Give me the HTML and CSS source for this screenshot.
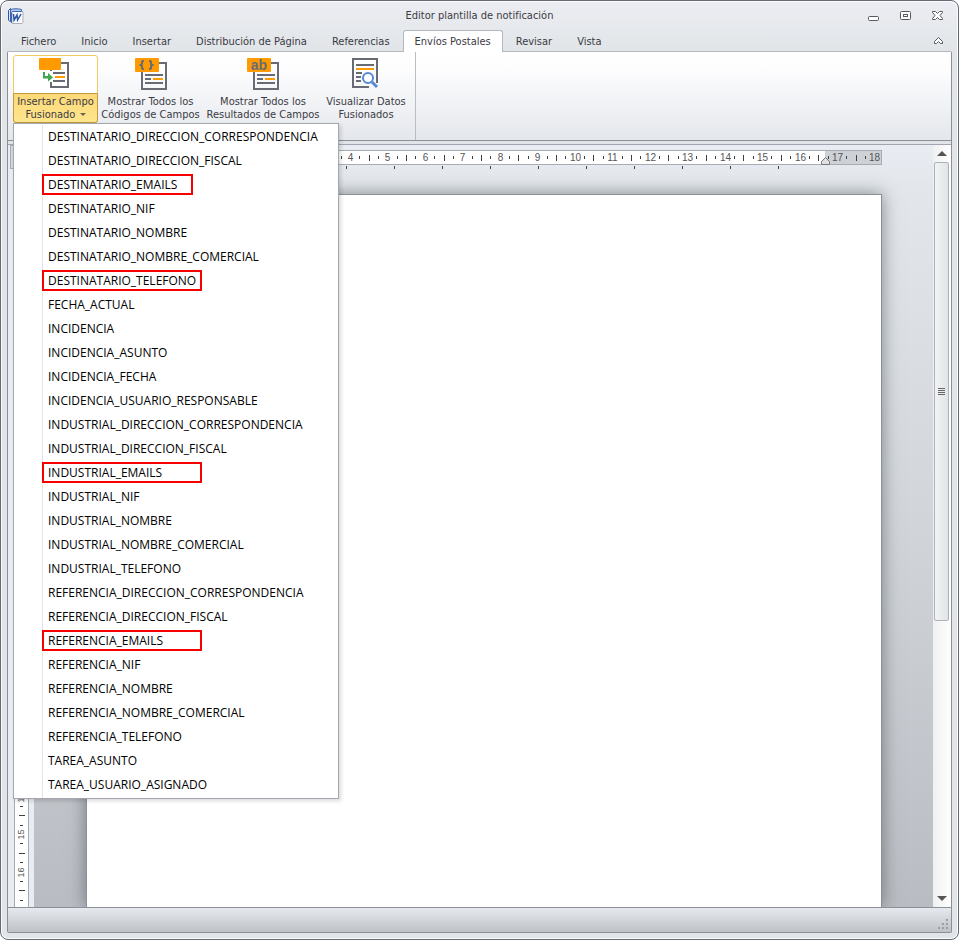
FILE: index.html
```html
<!DOCTYPE html>
<html lang="es">
<head>
  <meta charset="UTF-8" />
  <title>Editor plantilla de notificación</title>
  <link rel="stylesheet" href="styles.css">
</head>
<body>
  <div class="window">
    <header class="titlebar">
      <svg class="logo" width="17" height="16" viewBox="0 0 17 16" aria-hidden="true">
        <path d="M5 3.500h11v11l-1 1H5z" fill="#f8f9fc" stroke="#a9b1bf" />
        <path d="M1.500 2.500l2-2V14l-2-2z" fill="#dfe8f7" stroke="#2c57a7" />
        <path d="M3.500 1.500C7 .5 11 .5 14.500 1.500v2h-9l-1 1v10l-1-1z" fill="#b4c8ec" stroke="#3c66b4" />
        <path d="M6.500 6l.6 6 2.900-5 .6 5 3.400-6" fill="none" stroke="#2a55a5" stroke-width="1.500" />
      </svg>
      <h1>Editor plantilla de notificación</h1>
      <div class="window-buttons">
        <button aria-label="Minimizar"><svg width="12" height="12"><rect x="0.500" y="6.500" width="10" height="4" rx="1" fill="#fff" stroke="#555a62" /></svg></button>
        <button aria-label="Maximizar"><svg width="12" height="12"><rect x="0.500" y="1.500" width="10" height="8" rx="1" fill="#fff" stroke="#555a62" /><rect x="3.500" y="4.500" width="4" height="2" fill="#fff" stroke="#555a62" /></svg></button>
        <button aria-label="Cerrar"><svg width="12" height="12"><path d="M.5 1.500h3l2 2 2-2h3v1L8 5.500l2.500 3v1h-3l-2-2-2 2h-3v-1l2.500-3-2.500-3z" fill="#fff" stroke="#555a62" /></svg></button>
      </div>
    </header>

    <nav class="tabs">
      <button>Fichero</button>
      <button>Inicio</button>
      <button>Insertar</button>
      <button>Distribución de Página</button>
      <button>Referencias</button>
      <button class="active">Envíos Postales</button>
      <button>Revisar</button>
      <button>Vista</button>
      <button class="collapse" aria-label="Minimizar la cinta"><svg width="10" height="8"><path d="M.5 4.500L4.500.5l4 4v2h-2l-2-2-2 2h-2z" fill="#fff" stroke="#555a62" /></svg></button>
    </nav>

    <div class="workspace">
      <div class="ribbon">
        <div class="group">
          <div class="dropdown">
            <button class="tool open" aria-expanded="true">
              <svg width="34" height="34" viewBox="0 0 34 34">
                <path d="M12 12v18h17V6H22" fill="none" stroke="#686b74" stroke-width="2" />
                <path d="M14 16h12M14 24h12" stroke="#686b74" stroke-width="2" />
                <path d="M16 20h10" stroke="#ff9b00" stroke-width="2" />
                <path d="M10 14h3v11h-3z" fill="#fff" />
                <rect x="0" y="1" width="22" height="12" rx="1" fill="#ff9b00" />
                <path d="M4 15h2v4h3v-3l5 4.500-5 4v-3H4z" fill="#3fa84e" />
              </svg>
              <span class="label">Insertar Campo<br>Fusionado <i class="caret"></i></span>
            </button>
            <ul class="menu" id="menu">
              <li><button>DESTINATARIO_DIRECCION_CORRESPONDENCIA</button></li>
              <li><button>DESTINATARIO_DIRECCION_FISCAL</button></li>
              <li><button class="marked short">DESTINATARIO_EMAILS</button></li>
              <li><button>DESTINATARIO_NIF</button></li>
              <li><button>DESTINATARIO_NOMBRE</button></li>
              <li><button>DESTINATARIO_NOMBRE_COMERCIAL</button></li>
              <li><button class="marked">DESTINATARIO_TELEFONO</button></li>
              <li><button>FECHA_ACTUAL</button></li>
              <li><button>INCIDENCIA</button></li>
              <li><button>INCIDENCIA_ASUNTO</button></li>
              <li><button>INCIDENCIA_FECHA</button></li>
              <li><button>INCIDENCIA_USUARIO_RESPONSABLE</button></li>
              <li><button>INDUSTRIAL_DIRECCION_CORRESPONDENCIA</button></li>
              <li><button>INDUSTRIAL_DIRECCION_FISCAL</button></li>
              <li><button class="marked">INDUSTRIAL_EMAILS</button></li>
              <li><button>INDUSTRIAL_NIF</button></li>
              <li><button>INDUSTRIAL_NOMBRE</button></li>
              <li><button>INDUSTRIAL_NOMBRE_COMERCIAL</button></li>
              <li><button>INDUSTRIAL_TELEFONO</button></li>
              <li><button>REFERENCIA_DIRECCION_CORRESPONDENCIA</button></li>
              <li><button>REFERENCIA_DIRECCION_FISCAL</button></li>
              <li><button class="marked">REFERENCIA_EMAILS</button></li>
              <li><button>REFERENCIA_NIF</button></li>
              <li><button>REFERENCIA_NOMBRE</button></li>
              <li><button>REFERENCIA_NOMBRE_COMERCIAL</button></li>
              <li><button>REFERENCIA_TELEFONO</button></li>
              <li><button>TAREA_ASUNTO</button></li>
              <li><button>TAREA_USUARIO_ASIGNADO</button></li>
            </ul>
          </div>
          <button class="tool codes">
            <svg width="32" height="34" viewBox="0 0 32 34">
              <path d="M7 14v18h24V6H24" fill="none" stroke="#686b74" stroke-width="2" />
              <path d="M10 18h18M10 22h6M10 26h18" stroke="#686b74" stroke-width="2" />
              <path d="M18 22h10" stroke="#ff9b00" stroke-width="2" />
              <rect x="0" y="1" width="24" height="14" rx="1" fill="#ff9b00" />
              <path d="M9 4H8q-1 0-1 1v2L5.500 8 7 9v2q0 1 1 1h1M14 4h1q1 0 1 1v2l1.500 1L16 9v2q0 1-1 1h-1" fill="none" stroke="#686b74" stroke-width="2" />
            </svg>
            <span class="label">Mostrar Todos los<br>Códigos de Campos</span>
          </button>
          <button class="tool results">
            <svg width="32" height="34" viewBox="0 0 32 34">
              <path d="M7 14v18h24V6H24" fill="none" stroke="#686b74" stroke-width="2" />
              <path d="M10 18h18M10 22h6M10 26h18" stroke="#686b74" stroke-width="2" />
              <path d="M18 22h10" stroke="#ff9b00" stroke-width="2" />
              <rect x="0" y="1" width="24" height="14" rx="1" fill="#ff9b00" />
              <text x="12" y="13" class="icon-text">ab</text>
            </svg>
            <span class="label">Mostrar Todos los<br>Resultados de Campos</span>
          </button>
          <button class="tool view">
            <svg width="28" height="34" viewBox="0 0 28 34">
              <path d="M25 20V2H1v28h16" fill="none" stroke="#686b74" stroke-width="2" />
              <path d="M4 8h18M4 16h6M4 20h5M4 24h5" stroke="#686b74" stroke-width="2" />
              <path d="M4 12h18" stroke="#ff9b00" stroke-width="2" />
              <path d="M24 19h2v7h-2z" fill="#686b74" />
              <circle cx="16" cy="21" r="5" fill="#fff" stroke="#5489d6" stroke-width="2" />
              <path d="M20 25l5 5" stroke="#5489d6" stroke-width="3" />
            </svg>
            <span class="label">Visualizar Datos<br>Fusionados</span>
          </button>
        </div>
      </div>

      <div class="editor">
        <div class="side-ruler">
          <div class="tab-type"></div>
          <svg class="ruler-v" id="rulerV"></svg>
        </div>
        <main class="canvas">
          <svg class="ruler-h" id="rulerH" width="796" height="20"></svg>
          <div class="page" contenteditable="true" role="textbox" aria-label="Documento"></div>
        </main>
        <div class="scrollbar">
          <button aria-label="Subir"><i class="up"></i></button>
          <div class="track"><div class="thumb"><i></i></div></div>
          <button aria-label="Bajar"><i class="down"></i></button>
        </div>
      </div>

      <footer class="statusbar">
        <svg width="11" height="11" fill="#9a9fa6"><path d="M8 0h2v2H8zM4 4h2v2H4zM8 4h2v2H8zM0 8h2v2H0zM4 8h2v2H4zM8 8h2v2H8z" /></svg>
      </footer>
    </div>
  </div>

  <script>
    const CM = 37.47;

    function tick(x1, y1, x2, y2) {
      return `<path d="M${x1} ${y1}L${x2} ${y2}" class="tick" />`;
    }

    function drawHorizontal() {
      const zero = 115;
      const end = 739;
      let out = '<rect class="paper" x="0.5" y="0.5" width="795" height="14" />';
      out += `<rect class="margin" x="${end}" y="1" width="56" height="13" />`;
      for (let q = 1; q < 73; q++) {
        const x = Math.round(zero + q * CM / 4) - 0.5;
        if (q % 4 === 0) out += `<text x="${x}" y="11">${q / 4}</text>`;
        else if (q % 2 === 0) out += tick(x, 5, x, 11);
        else out += tick(x, 6, x, 9);
      }
      for (let x = 20.5; x < 700; x += 48) out += tick(x, 16, x, 19);
      out += `<path class="marker" d="M${end - 4}.5 14.5v-3l4-4 4 4v3z" />`;
      document.getElementById("rulerH").innerHTML = out;
    }

    function drawVertical() {
      const ruler = document.getElementById("rulerV");
      const height = ruler.getBoundingClientRect().height;
      const zero = 103;
      let out = "";
      for (let q = 1; zero + q * CM / 4 < height - 5; q++) {
        const y = Math.round(zero + q * CM / 4) + 0.5;
        if (q % 4 === 0) out += `<text transform="translate(9 ${y}) rotate(-90)">${q / 4}</text>`;
        else if (q % 2 === 0) out += tick(4, y, 10, y);
        else out += tick(5, y, 8, y);
      }
      ruler.innerHTML = out;
    }

    drawHorizontal();
    drawVertical();
    window.addEventListener("resize", drawVertical);
  </script>
</body>
</html>
```
FILE: styles.css
```css
* {
  box-sizing: border-box;
}

body {
  margin: 0;
  background: #fff;
  font-family: "DejaVu Sans Condensed", "DejaVu Sans", sans-serif;
  font-size: 11px;
  color: #3b3b44;
}

button {
  font: inherit;
  color: inherit;
  background: none;
  border: none;
  padding: 0;
  cursor: pointer;
}

.window {
  height: 100vh;
  min-height: 820px;
  display: flex;
  flex-direction: column;
  padding: 0 6px 6px;
  border: 1px solid #646974;
  border-radius: 8px;
  box-shadow: inset 0 0 0 1px #fbfcfd;
  background: linear-gradient(#ecedf2, #e1e5e8 50px);
}

/* title bar */

.titlebar {
  height: 29px;
  display: grid;
  grid-template-columns: 80px 1fr 80px;
  align-items: center;
}

.titlebar h1 {
  margin: 0;
  font-size: 11px;
  font-weight: normal;
  text-align: center;
}

.window-buttons {
  display: flex;
  gap: 20px;
  justify-content: flex-end;
  padding-right: 8px;
}

.window-buttons button,
.window-buttons svg,
.collapse svg {
  display: block;
}

/* tabs */

.tabs {
  display: flex;
  height: 21px;
  padding-left: 2px;
}

.tabs button {
  padding: 0 11px;
  margin-right: 1px;
  border: 1px solid transparent;
  border-bottom: none;
  white-space: nowrap;
}

.tabs .active {
  position: relative;
  z-index: 1;
  height: 22px;
  background: #fff;
  border-color: #b4b8be;
  border-radius: 3px 3px 0 0;
}

.tabs .collapse {
  margin: 0 0 0 auto;
  padding: 0 7px;
}

.workspace {
  flex: 1;
  min-height: 0;
  display: flex;
  flex-direction: column;
  border: 1px solid #8b8f98;
  border-top-color: #b4b8be;
  border-radius: 2px;
}

/* ribbon */

.ribbon {
  display: flex;
  height: 89px;
  background: linear-gradient(#fff, #fdfdfe 20%, #e4e7ec);
  border-bottom: 1px solid #8b8f98;
}

.group {
  display: flex;
  align-items: flex-start;
  padding: 3px 6px 0 5px;
  border-right: 1px solid #b9bdc4;
}

.dropdown {
  position: relative;
}

.tool {
  display: flex;
  flex-direction: column;
  align-items: center;
  height: 68px;
  padding-top: 2px;
  line-height: 13px;
  white-space: nowrap;
}

.tool svg {
  display: block;
}

.tool .label {
  padding-top: 4px;
}

.tool.open {
  width: 85px;
  border: 1px solid #f0cb5e;
  border-radius: 3px;
  padding: 1px 0 0;
  background: #fff;
}

.open .label {
  align-self: stretch;
  flex: 1;
  margin: 2px -1px -1px;
  padding-top: 1px;
  background: linear-gradient(#fcd978, #ffe58d);
  border: 1px solid #c29b3d;
  border-radius: 0 0 3px 3px;
}

.codes {
  width: 105px;
}

.results {
  width: 120px;
}

.view {
  width: 86px;
}

.icon-text {
  font: bold 14px "Liberation Sans", Arial, sans-serif;
  fill: #686b74;
  text-anchor: middle;
}

.caret {
  display: inline-block;
  margin: 0 0 2px 1px;
  border: 3px solid transparent;
  border-top-color: #6b6250;
  border-bottom: none;
}

/* merge field menu */

.menu {
  position: absolute;
  z-index: 5;
  top: 68px;
  left: 0;
  width: 326px;
  margin: 0;
  padding: 0 0 2px;
  list-style: none;
  background: linear-gradient(#e2e4e7, #e2e4e7) 28px 1px / 1px 100% no-repeat #fff;
  border: 1px solid #a4a7ad;
  box-shadow: 2px 2px 4px rgba(0, 0, 0, 0.15);
  font-family: "Open Sans", "Noto Sans", sans-serif;
  font-size: 12px;
  color: #000;
}

.menu li {
  display: flex;
  align-items: center;
  height: 24px;
  padding-left: 28px;
}

.menu button {
  height: 21px;
  padding: 0 4px;
  border: 2px solid transparent;
  line-height: 17px;
  text-align: left;
  white-space: nowrap;
}

.menu .marked {
  width: 160px;
  border-color: #f60000;
}

.menu .short {
  width: 151px;
}

/* document area */

.editor {
  flex: 1;
  min-height: 0;
  display: flex;
  margin-top: 3px;
  border-top: 1px solid #a0a5b1;
  background: #e9ecf2;
  overflow: hidden;
}

.side-ruler {
  width: 26px;
  flex: none;
  display: flex;
  flex-direction: column;
}

.tab-type {
  width: 22px;
  height: 24px;
  flex: none;
  margin: 0 2px;
  border: 1px solid #a7abb3;
  background: #d4d7dc;
}

.ruler-v {
  flex: 1;
  min-height: 0;
  width: 15px;
  margin-left: 6px;
  background: #fff;
  border: solid #a7abb3;
  border-width: 0 1px;
}

.canvas {
  flex: 1;
  min-width: 0;
  display: flex;
  flex-direction: column;
  align-items: center;
  padding-top: 5px;
  background: linear-gradient(#e9ecf2, #e3e7ec 40px, #d1d5da 50%, #b9bcc2);
  overflow: hidden;
}

.ruler-h {
  display: block;
  flex: none;
}

.page {
  flex: 1;
  width: 796px;
  margin-top: 24px;
  background: #fff;
  border: 1px solid #8d9095;
  border-bottom: none;
  box-shadow: 0 0 16px rgba(60, 70, 75, 0.6);
  outline: none;
}

.paper {
  fill: #fff;
  stroke: #a7abb3;
}

.margin {
  fill: #ced1d6;
}

.marker {
  fill: #e0e0e0;
  stroke: #777;
}

.tick {
  stroke: #404040;
}

.ruler-h text,
.ruler-v text {
  font: 10px "Liberation Sans", Arial, sans-serif;
  fill: #555;
  text-anchor: middle;
}

.ruler-v text {
  font-size: 9px;
}

/* scroll bar */

.scrollbar {
  width: 18px;
  flex: none;
  display: flex;
  flex-direction: column;
  padding-right: 1px;
  background: linear-gradient(90deg, #eff0f1, #fff);
}

.scrollbar button {
  height: 17px;
  display: flex;
  align-items: center;
  justify-content: center;
}

.up,
.down {
  border: 5px solid transparent;
}

.up {
  border-top: none;
  border-bottom-color: #555;
}

.down {
  border-bottom: none;
  border-top-color: #555;
}

.track {
  flex: 1;
  padding: 0 1px;
}

.thumb {
  height: 63%;
  display: flex;
  align-items: center;
  justify-content: center;
  border: 1px solid #acb0b8;
  border-radius: 2px;
  background: linear-gradient(90deg, #f3f4f4, #e1e3e5);
}

.thumb i {
  width: 7px;
  height: 7px;
  background: repeating-linear-gradient(#666 0 1px, transparent 1px 2px);
}

/* status bar */

.statusbar {
  height: 25px;
  display: flex;
  justify-content: flex-end;
  align-items: flex-end;
  padding: 0 2px 2px;
  border-top: 1px solid #8b8f98;
  background: linear-gradient(#e6e9ed, #bec2c7);
}
```
